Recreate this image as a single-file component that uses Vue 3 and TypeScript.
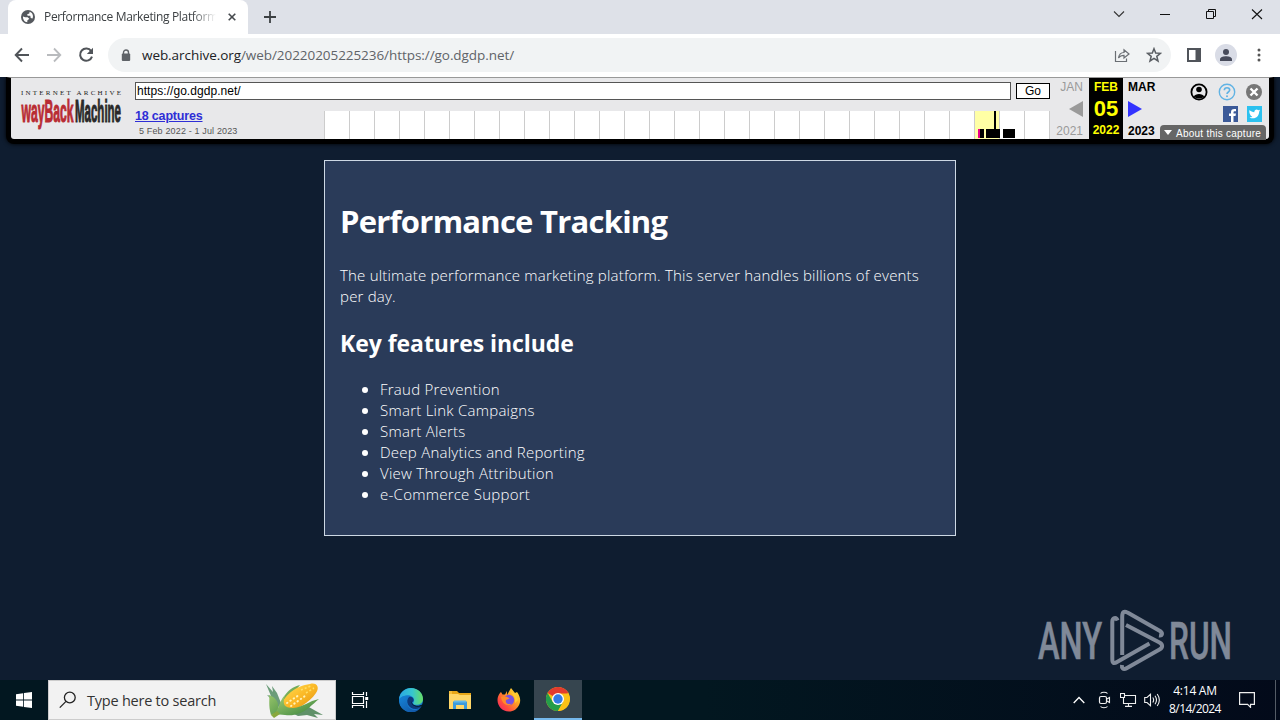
<script setup lang="ts">
interface Mark {
  left: number
  width: number
  top: number
  height: number
  color: string
}

const years: number[] = Array.from({ length: 29 }, (_, i) => 1996 + i)
const currentYear = 2022

const marks: Mark[] = [
  { left: 654, width: 2, top: 18, height: 9, color: '#ec008c' },
  { left: 656, width: 4, top: 18, height: 9, color: '#000' },
  { left: 662, width: 14, top: 18, height: 9, color: '#000' },
  { left: 670, width: 2, top: 0, height: 18, color: '#000' },
  { left: 679, width: 12, top: 18, height: 9, color: '#000' },
]

const features: string[] = [
  'Fraud Prevention',
  'Smart Link Campaigns',
  'Smart Alerts',
  'Deep Analytics and Reporting',
  'View Through Attribution',
  'e-Commerce Support',
]

function markStyle(m: Mark) {
  return {
    left: `${m.left}px`,
    width: `${m.width}px`,
    top: `${m.top}px`,
    height: `${m.height}px`,
    background: m.color,
  }
}
</script>

<template>
  <div class="screen">
    <header class="tabstrip">
      <div class="tab">
        <svg class="globe" width="14" height="14" viewBox="0 0 14 14">
          <circle cx="7" cy="7" r="7" fill="#55595e" />
          <path d="M2 6.500C1.800 9.600 3.600 12 6.300 12.200V10.600L8.300 8.700 6.600 7.200H4.200Z" fill="#fff" />
          <path d="M6 1.800 8.600 1.700 8.300 3.500 6.200 4.300 6.600 5.800 9.300 5.700 9.700 8 11.500 8.600C12.800 5.700 11.500 2.600 8.600 1.700" fill="#fff" />
        </svg>
        <span class="tab-title">Performance Marketing Platform</span>
        <svg class="tab-close" width="8" height="8" viewBox="0 0 8 8"><path d="M.7.7 7.300 7.300M7.300.7.7 7.300" stroke="#45494d" stroke-width="1.600" /></svg>
      </div>
      <svg class="plus" width="12" height="12" viewBox="0 0 12 12"><path d="M6 0V12M0 6H12" stroke="#3c4043" stroke-width="1.800" /></svg>
      <div class="window-buttons">
        <svg width="46" height="28" viewBox="0 0 46 28"><path d="M18 11.500 23 16.500 28 11.500" fill="none" stroke="#333" stroke-width="1.100" /></svg>
        <svg width="46" height="28" viewBox="0 0 46 28"><path d="M18 14.500H28" stroke="#111" /></svg>
        <svg width="46" height="28" viewBox="0 0 46 28"><path d="M18.500 11.500H25.500V18.500H18.500ZM20.500 11.500V9.500H27.500V16.500H25.500" fill="none" stroke="#111" /></svg>
        <svg width="46" height="28" viewBox="0 0 46 28"><path d="M18 9.500 28 19M28 9.500 18 19" stroke="#111" stroke-width="1.100" /></svg>
      </div>
    </header>

    <div class="toolbar">
      <svg class="nav" width="16" height="16" viewBox="0 0 16 16"><path d="M15 8H2M8 1.500 1.700 8 8 14.500" fill="none" stroke="#505459" stroke-width="1.900" /></svg>
      <svg class="nav" width="16" height="16" viewBox="0 0 16 16"><path d="M1 8H14M8 1.500 14.300 8 8 14.500" fill="none" stroke="#b9bbbe" stroke-width="1.800" /></svg>
      <svg class="nav" width="16" height="16" viewBox="0 0 16 16"><path d="M13.200 4.100A6.100 6.100 0 1 0 14 9.600" fill="none" stroke="#505459" stroke-width="2" /><path d="M15 .8V7H8.800Z" fill="#505459" /></svg>
      <div class="omnibox">
        <svg class="lock" width="10" height="13" viewBox="0 0 10 13"><path d="M2.500 5V3.500a2.500 2.500 0 0 1 5 0V5" fill="none" stroke="#5f6368" stroke-width="1.400" /><rect x=".8" y="4.500" width="8.400" height="7.500" rx="1" fill="#5f6368" /></svg>
        <span class="url"><b>web.archive.org</b>/web/20220205225236/https://go.dgdp.net/</span>
        <svg class="share" width="16" height="16" viewBox="0 0 16 16"><path d="M1.500 4V14.500H12.500V11.500M4.500 11C5 7.500 7 5.600 10 5.500V2.700L15 7 10 11V8.300C7.500 8.300 5.800 9 4.500 11Z" fill="none" stroke="#6a6e73" stroke-width="1.200" /></svg>
        <svg width="16" height="16" viewBox="0 0 16 16"><path d="M8 1.700 9.700 6 14.500 6.300 10.800 9.300 12 14 8 11.400 4 14 5.200 9.300 1.500 6.300 6.300 6Z" fill="none" stroke="#5a5e63" stroke-width="1.500" /></svg>
      </div>
      <svg class="panel" width="14" height="14" viewBox="0 0 14 14"><rect x="1" y="1" width="12" height="12" fill="none" stroke="#50545a" stroke-width="2" /><path d="M8.500 1H13V13H8.500Z" fill="#50545a" /></svg>
      <svg class="profile" width="22" height="22" viewBox="0 0 22 22"><circle cx="11" cy="11" r="11" fill="#d9dce6" /><circle cx="11" cy="8" r="3" fill="#474b5b" /><path d="M5 17V15.300C5 13 8.500 12.200 11 12.200S17 13 17 15.300V17Z" fill="#474b5b" /></svg>
      <svg class="dots" width="4" height="14" viewBox="0 0 4 14"><circle cx="2" cy="2" r="1.500" fill="#555" /><circle cx="2" cy="7" r="1.500" fill="#555" /><circle cx="2" cy="12" r="1.500" fill="#555" /></svg>
    </div>

    <main class="page">
      <section class="wayback">
        <svg class="wb-logo" width="104" height="46" viewBox="0 0 104 46">
          <text x="1" y="9" textLength="100" class="ia">INTERNET ARCHIVE</text>
          <g class="wm">
            <text x="1.500" y="36" textLength="52" lengthAdjust="spacingAndGlyphs" fill="#b92c33" stroke="#b92c33">wayBack</text>
            <text x="55" y="36" textLength="46" lengthAdjust="spacingAndGlyphs" fill="#292929" stroke="#292929">Machine</text>
          </g>
        </svg>
        <div class="wb-center">
          <div class="wb-search"><span class="wb-input">https://go.dgdp.net/</span><span class="wb-go">Go</span></div>
          <div class="wb-row">
            <div class="captures"><a>18 captures</a><span>5 Feb 2022 - 1 Jul 2023</span></div>
            <div class="spark">
              <i v-for="y in years" :key="y" :class="{ on: y === currentYear }"></i>
              <em v-for="(m, i) in marks" :key="i" :style="markStyle(m)"></em>
            </div>
          </div>
        </div>
        <div class="when prev"><span>JAN</span><svg width="14" height="16" viewBox="0 0 14 16"><path d="M14 0V16L0 8Z" fill="#9a9a9a" /></svg><span>2021</span></div>
        <div class="when now"><span>FEB</span><strong>05</strong><span>2022</span></div>
        <div class="when next"><span>MAR</span><svg width="14" height="16" viewBox="0 0 14 16"><path d="M0 0V16L14 8Z" fill="#3333ff" /></svg><span>2023</span></div>
        <div class="wb-tools">
          <div class="tool-icons">
            <svg width="18" height="18" viewBox="0 0 18 18"><circle cx="9" cy="9" r="7.600" fill="none" stroke="#000" stroke-width="1.800" /><circle cx="9" cy="6.500" r="2.800" /><path d="M3.800 13.500C5 10 13 10 14.200 13.500 12 16 6 16 3.800 13.500Z" /></svg>
            <svg width="18" height="18" viewBox="0 0 18 18"><circle cx="9" cy="9" r="7.700" fill="none" stroke="#61b3e4" stroke-width="1.400" /><path d="M6.300 7.300C6.300 3.800 11.700 4 11.700 7.100 11.700 9 9 9 9 11" fill="none" stroke="#61b3e4" stroke-width="1.600" /><circle cx="9" cy="13.200" r="1" fill="#61b3e4" /></svg>
            <svg width="18" height="18" viewBox="0 0 18 18"><circle cx="9" cy="9" r="8" fill="#777" /><path d="M5.500 5.500 12.500 12.500M12.500 5.500 5.500 12.500" stroke="#fff" stroke-width="2.400" /></svg>
          </div>
          <div class="social">
            <svg width="15" height="16" viewBox="0 0 15 16"><path d="M0 0H15V16H0Z" fill="#3b5998" /><path d="M8 16V10H6V7.500H8V6C8 3.500 9.500 2.500 13 3V5.200C11 5 10.500 5.300 10.500 6.300V7.500H13L12.500 10H10.500V16Z" fill="#fff" /></svg>
            <svg width="15" height="16" viewBox="0 0 15 16"><path d="M0 0H15V16H0Z" fill="#2cc1ef" /><path d="M2.500 4C4 5.500 5.500 6 7.300 6.200 7.300 3.500 10 3 11.200 4.300L13 3.800 12.200 5.700C12 10.500 8 14 2.500 11.500 4 11.500 4.800 11.200 5.300 10.600 4 10.200 3.500 9.500 3.300 8.700 2.500 7.500 2 5.500 2.500 4Z" fill="#fff" /></svg>
          </div>
          <div class="about"><svg width="8" height="5" viewBox="0 0 8 5"><path d="M0 0H8L4 5Z" fill="#fff" /></svg><span>About this capture</span></div>
        </div>
      </section>

      <article class="card">
        <h1>Performance Tracking</h1>
        <p>The ultimate performance marketing platform. This server handles billions of events<br />per day.</p>
        <h2>Key features include</h2>
        <ul>
          <li v-for="f in features" :key="f"><span>{{ f }}</span></li>
        </ul>
      </article>

      <svg class="watermark" width="200" height="70" viewBox="1036 605 200 70">
        <g class="brand">
          <text x="1038" y="659" textLength="64" lengthAdjust="spacingAndGlyphs">ANY</text>
          <text x="1169" y="659" textLength="63" lengthAdjust="spacingAndGlyphs">RUN</text>
        </g>
        <g transform="translate(1020 600)" fill="none" stroke="#808998" stroke-width="4" stroke-linejoin="round">
          <path d="M97.500 20.500C96 16.500 92.300 18 92.300 22V59C92.300 63.500 94 64 97 62L129.500 43.500" />
          <path d="M102.200 55V17C102.200 12 104 10.500 107.500 12.600L140 31C143 33 142.500 36 139 35.500" />
          <path d="M106 25 139.500 42.500C143 44.500 143 47.500 139.500 49.500L107 68C103 70.500 101.500 68 102 65" />
        </g>
      </svg>
    </main>

    <footer class="taskbar">
      <div class="start"><svg width="16" height="16" viewBox="0 0 16 16"><path d="M0 2.200 7.200 1.200V7.600H0ZM8 1.100 16 0V7.600H8ZM0 8.400H7.200V14.800L0 13.800ZM8 8.400H16V16L8 14.900Z" fill="#fff" /></svg></div>
      <div class="search">
        <svg width="18" height="18" viewBox="0 0 18 18"><circle cx="10.800" cy="6.500" r="5.400" fill="none" stroke="#222" stroke-width="1.300" /><path d="M7 10.400 .8 16.600" stroke="#222" stroke-width="1.300" /></svg>
        <span>Type here to search</span>
        <svg class="corn" width="60" height="38" viewBox="0 0 60 38">
          <defs>
            <linearGradient id="kernel" x1="0" y1="0" x2="1" y2="1"><stop offset="0" stop-color="#ffe45b" /><stop offset=".5" stop-color="#fbb927" /><stop offset="1" stop-color="#df8f0c" /></linearGradient>
            <linearGradient id="husk" x1="0" y1="0" x2="1" y2="1"><stop offset="0" stop-color="#a9d173" /><stop offset="1" stop-color="#35813c" /></linearGradient>
          </defs>
          <path d="M1 3 8 11 7 5 12 12 16 22 11 30 6 22 8 20 2 14 6 15Z" fill="#6b9c79" />
          <path d="M25 31 42 25 58 34 49 33 53 37 42 34 33 35Z" fill="#5f9168" />
          <path d="M6 34C3 24 5 18 4 14 12 17 14 22 13 28 18 18 20 8 35 4L30 10 16 30Z" fill="url(#husk)" />
          <path d="M15 28C18 14 31 5 45 3 52 1 55 7 51 12 44 22 31 30 20 30Z" fill="url(#kernel)" />
          <path d="M22 22 34 14M26 25 40 15" stroke="#fff3b8" stroke-width="2" stroke-linecap="round" stroke-dasharray=".5 3.500" />
          <path d="M36 9 46 5M41 12 49 7" stroke="#ffdf66" stroke-width="1.500" stroke-dasharray="2 2" />
          <path d="M9 33C15 27 14 20 20 14 17 23 19 27 28 27 38 26 44 20 54 18 45 25 38 36 20 34Z" fill="url(#husk)" />
          <path d="M6 34 12 30 15 33 9 37Z" fill="#89a83c" />
        </svg>
      </div>
      <div class="app"><svg width="18" height="18" viewBox="0 0 18 18"><path d="M1.500 1V3.500H12.500V1M1.500 5.500H12.500V12.500H1.500ZM1.500 17V14.500H12.500V17M15.500 1V5M15.500 10V17" fill="none" stroke="#fff" stroke-width="1.200" /><rect x="14.200" y="6" width="3" height="3" fill="#fff" /></svg></div>
      <div class="app edge">
        <svg width="24" height="24" viewBox="0 0 24 24">
          <defs>
            <linearGradient id="edgeTop" x1="0" x2="1"><stop offset="0" stop-color="#2aa7e4" /><stop offset=".55" stop-color="#36c6cf" /><stop offset="1" stop-color="#67de63" /></linearGradient>
            <linearGradient id="edgeLow" x1="0" y1="0" x2="1" y2="1"><stop offset="0" stop-color="#1685d9" /><stop offset="1" stop-color="#114f9e" /></linearGradient>
          </defs>
          <circle cx="12" cy="12" r="12" fill="#157bd0" />
          <path d="M0 11C1 4 6 0 12 0 19 0 24 5 24 11 24 15 20 17.500 16 16.700 13.500 16 14 15 15 13.500 16 9 11 6.500 7 7.500 3 8.500 1 10 0 11Z" fill="url(#edgeTop)" />
          <path d="M0 12C2 8 6 7 10 8.500 7 10 6.500 18 12 21 16 23 20 21.500 22.300 18.500 18 27 5 26 1 17Z" fill="url(#edgeLow)" />
          <path d="M10 9C6 13 9 21 17 21 19.500 21 21.500 19.700 22.800 17.500 19 19 13.500 18 13 14.500 13.500 14 15.300 13 14.500 11 13.600 9 11.500 8.300 10 9Z" fill="#0d397b" />
          <path d="M13 13C12.500 15.500 14 17 16.500 17.500 19 18 21.500 17.500 23.300 16.200L24 20 22.800 17.800C19 20 13.500 18.500 12.500 15Z" fill="#021720" />
        </svg>
      </div>
      <div class="app folder">
        <svg width="22" height="20" viewBox="0 0 22 20"><path d="M0 1H8L10 3H22V19H0Z" fill="#e8a718" /><path d="M0 4H9L11 5H22V19H0Z" fill="#ffd768" /><path d="M0 1H3V4H0Z" fill="#f6bf3b" /><path d="M4 19V11.500H18V19H15V15H7V19Z" fill="#3b9bdc" /><path d="M5 10.500H17V12.500H5Z" fill="#62b9e9" /></svg>
      </div>
      <div class="app fox">
        <svg width="24" height="24" viewBox="0 0 24 24">
          <defs>
            <linearGradient id="fox" x1="1" y1="0" x2="0" y2="1"><stop offset="0" stop-color="#fff04b" /><stop offset=".35" stop-color="#ffac21" /><stop offset=".7" stop-color="#ff4f3d" /><stop offset="1" stop-color="#ed1771" /></linearGradient>
          </defs>
          <path d="M4 4 5.500 6.500 8 6.500 10 3V7L14 0 18 5 20 4C23 8 24 12 22.500 16 20.500 21 16.500 23.500 12 23.500 5 23.500.5 18 .5 12 .5 9 1.500 7 3 5Z" fill="url(#fox)" />
          <circle cx="12" cy="12" r="5.200" fill="#7851df" />
          <path d="M4 9C7 7 11 9 12.500 10.500L9 12C8 15 11 17 15 15.500 12 19 5 17 4 9Z" fill="#ff8a29" />
          <path d="M13 4C16 6 19 10 18 15L21 12 19 6Z" fill="#ffcb34" />
        </svg>
      </div>
      <div class="app active">
        <svg width="24" height="24" viewBox="0 0 24 24"><circle cx="12" cy="12" r="12" fill="#fbc116" /><path d="M12 12 22.400 6A12 12 0 0 0 1.600 6Z" fill="#e33b2e" /><path d="M1.600 6A12 12 0 0 0 12 24L17.200 15 6.800 15Z" fill="#249d4a" /><path d="M12 6.500H22.400A12 12 0 0 1 12 24L17 15Z" fill="#fbc116" /><circle cx="12" cy="12" r="6" fill="#fff" /><circle cx="12" cy="12" r="4.700" fill="#347be5" /></svg>
      </div>
      <div class="tray">
        <svg width="12" height="8" viewBox="0 0 12 8"><path d="M.7 7 6 1.500 11.300 7" fill="none" stroke="#fff" stroke-width="1.300" /></svg>
        <svg class="cam" width="13" height="18" viewBox="0 0 13 18"><rect x="1.500" y="5.500" width="7" height="7" rx="1.500" fill="none" stroke="#eee" stroke-width="1.200" /><path d="M9 8 11.500 6.500V11.500L9 10M2.500 2.500C4 .8 8 .8 9.500 2.500M2.500 15.500C4 17.200 8 17.200 9.500 15.500" fill="none" stroke="#eee" stroke-width="1.100" /></svg>
        <svg class="net" width="17" height="14" viewBox="0 0 17 14"><path d="M5 2.500H15.500V10.500H3.500V5M8.500 10.500V13M5 13.400H12M.5.500H4.500V4.500H.5Z" fill="none" stroke="#eee" stroke-width="1.100" /></svg>
        <svg class="vol" width="17" height="14" viewBox="0 0 17 14"><path d="M.7 4.500H3L6.500 1.300V12.700L3 9.500H.7ZM8.800 4.500Q10.500 7 8.800 9.500M11 2.700Q14 7 11 11.300M13.200 1Q17.500 7 13.200 13" fill="none" stroke="#eee" stroke-width="1.100" /></svg>
        <div class="clock"><span>4:14 AM</span><span class="date">8/14/2024</span></div>
        <svg class="note" width="16" height="16" viewBox="0 0 16 16"><path d="M.6.600H15.400V12.400H11.500V15.300L8.600 12.400H.6Z" fill="none" stroke="#eee" stroke-width="1.200" /></svg>
      </div>
    </footer>
  </div>
</template>

<style>
body { margin: 0; overflow: hidden; }
</style>

<style scoped>
* { box-sizing: border-box; }
svg { display: block; flex: none; }
.screen { width: 1280px; height: 720px; display: flex; flex-direction: column; overflow: hidden; font-family: "Open Sans", "Noto Sans", sans-serif; }

.tabstrip { height: 34px; flex: none; display: flex; background: #dee1e8; padding-left: 8px; }
.tab { width: 240px; height: 34px; background: #fff; border-radius: 8px 8px 0 0; display: flex; align-items: center; padding: 0 12px 0 13px; }
.tab-title { width: 172px; margin-left: 9px; font-size: 12px; letter-spacing: -0.34px; line-height: 18px; color: #3c4043; white-space: nowrap; overflow: hidden; -webkit-mask-image: linear-gradient(90deg, #000 86%, transparent); mask-image: linear-gradient(90deg, #000 86%, transparent); }
.tab-close { margin-left: 12px; }
.plus { margin: 11px 0 0 16px; }
.window-buttons { display: flex; margin-left: auto; }

.toolbar { height: 43px; flex: none; display: flex; align-items: center; background: #fff; padding: 0 0 1px 14px; }
.nav { margin-right: 16px; }
.omnibox { width: 1063px; height: 34px; margin-left: -2px; border-radius: 17px; background: #f1f3f4; display: flex; align-items: center; padding: 0 9px 0 13px; }
.url { margin-left: 11px; margin-right: auto; font-size: 13.500px; line-height: 20px; letter-spacing: -0.06px; color: #5f6368; white-space: nowrap; }
.url b { font-weight: 400; color: #202124; }
.share { margin-right: 16px; }
.panel { margin-left: 16px; }
.profile { margin-left: 14px; }
.dots { margin-left: 20px; }

.page { height: 603px; flex: none; background: #0f1d30; position: relative; display: flex; flex-direction: column; align-items: center; overflow: hidden; }
.wayback { width: 1268px; height: 67px; background: #e8e8ea; border: 5px solid #000; border-top: 1px solid #999; border-radius: 0 0 8px 8px; box-shadow: 0 0 4px #000; display: flex; font-family: "Liberation Sans", Arial, sans-serif; padding-left: 9px; }
.wb-logo { margin-top: 8px; }
.ia { font: 7px "Liberation Serif", serif; fill: #222; }
.wm { font: bold 31px "Liberation Sans", sans-serif; stroke-width: 1.1; }
.wb-center { width: 915px; margin-left: 11px; }
.wb-search { display: flex; margin-top: 4px; align-items: center; }
.wb-input { width: 876px; height: 18px; background: #fff; border: 1px solid #555; font-size: 12px; line-height: 16px; padding-left: 1px; letter-spacing: 0.05px; color: #000; }
.wb-go { width: 34px; height: 16px; margin-left: 5px; background: #fff; border: 1px solid #000; font-size: 12px; line-height: 14px; text-align: center; }
.wb-row { display: flex; }
.captures { width: 189px; padding-top: 8px; display: flex; flex-direction: column; }
.captures a { font-size: 12.500px; font-weight: 700; line-height: 16px; letter-spacing: -0.18px; color: #2e2ed6; text-decoration: underline; }
.captures span { font-size: 9px; line-height: 14px; color: #555; padding-left: 4px; letter-spacing: 0.15px; }
.spark { width: 726px; height: 28px; margin-top: 11px; display: flex; position: relative; background: #fff; border-right: 1px solid #ccc; }
.spark i { width: 25px; height: 28px; border-left: 1px solid #ccc; }
.spark i.on { background: #ffffa5; }
.spark em { position: absolute; }
.when { height: 61px; display: flex; flex-direction: column; justify-content: space-between; font-size: 12px; line-height: 14px; padding: 2px 0; }
.prev { width: 33px; align-items: flex-end; color: #9a9a9a; }
.prev, .next { padding-bottom: 1px; }
.now { width: 34px; margin-left: 6px; align-items: center; background: #000; color: #ff0; font-weight: 700; }
.now strong { font-size: 22px; line-height: 20px; }
.next { width: 32px; margin-left: 5px; align-items: flex-start; color: #000; font-weight: 700; }
.wb-tools { width: 106px; display: flex; flex-direction: column; align-items: flex-end; }
.tool-icons { display: flex; gap: 9.500px; margin: 5px 3px 0 0; }
.social { display: flex; gap: 9px; margin: 5px 4px 0 0; }
.about { width: 106px; height: 15px; margin-top: 3px; background: #666; color: #fff; border-radius: 4px 4px 0 0; display: flex; align-items: center; padding-left: 4px; }
.about span { margin-left: 4px; font-size: 10px; line-height: 15px; padding-top: 1px; white-space: nowrap; letter-spacing: 0.25px; }

.card { width: 632px; height: 376px; margin-top: 16px; border: 1px solid #cdd8e4; background: #2a3b59; color: #fff; padding: 0 15px; }
h1 { margin: 39px 0 0; font-size: 31px; line-height: 43px; font-weight: 700; letter-spacing: -0.75px; white-space: nowrap; }
p { margin: 22px 0 0; font-size: 15px; line-height: 21px; font-weight: 300; letter-spacing: 0.2px; white-space: nowrap; }
h2 { margin: 20px 0 0; font-size: 23px; line-height: 32px; font-weight: 700; letter-spacing: -0.06px; }
ul { margin: 20px 0 0; padding-left: 22px; font-size: 15px; line-height: 21px; font-weight: 300; letter-spacing: 0.25px; list-style: none; }
li { display: flex; align-items: center; gap: 12px; }
li::before { content: ""; width: 6px; height: 6px; border-radius: 50%; background: #fff; }
.watermark { position: absolute; left: 1036px; top: 528px; }
.brand { font: 500 52px Roboto, sans-serif; fill: #808998; stroke: #808998; stroke-width: 0.6; }

.taskbar { height: 40px; flex: none; display: flex; background: linear-gradient(90deg, #021720, #021720 55%, #030a1a); }
.start { width: 48px; display: flex; align-items: center; justify-content: center; }
.search { width: 288px; height: 40px; background: #f2f2f2; border: 1px solid #ccc; display: flex; align-items: center; padding-left: 10px; color: #333; }
.search span { margin-left: 10px; padding-top: 1px; font-size: 14.500px; line-height: 22px; letter-spacing: -0.23px; white-space: nowrap; }
.corn { margin-left: auto; margin-right: 10px; }
.app { width: 48px; margin-left: 2px; display: flex; align-items: center; justify-content: center; }
.app:nth-of-type(3) { margin-left: 0; }
.app.edge { margin-left: 3px; }
.app.folder { margin-left: 1px; }
.app.fox { margin-left: 1px; }
.app.active { background: #36454f; border-bottom: 2px solid #76b9ed; margin-left: 1px; }
.tray { margin-left: auto; display: flex; align-items: center; color: #fff; border-right: 1px solid #555c66; margin-right: 4px; }
.cam { margin-left: 13px; }
.net { margin-left: 9px; }
.vol { margin-left: 7px; }
.clock { width: 66px; margin-left: 1px; display: flex; flex-direction: column; align-items: center; font-size: 12px; line-height: 18px; letter-spacing: -0.25px; white-space: nowrap; }
.date { letter-spacing: -0.55px; }
.note { margin-left: 11px; margin-right: 20px; }
</style>
